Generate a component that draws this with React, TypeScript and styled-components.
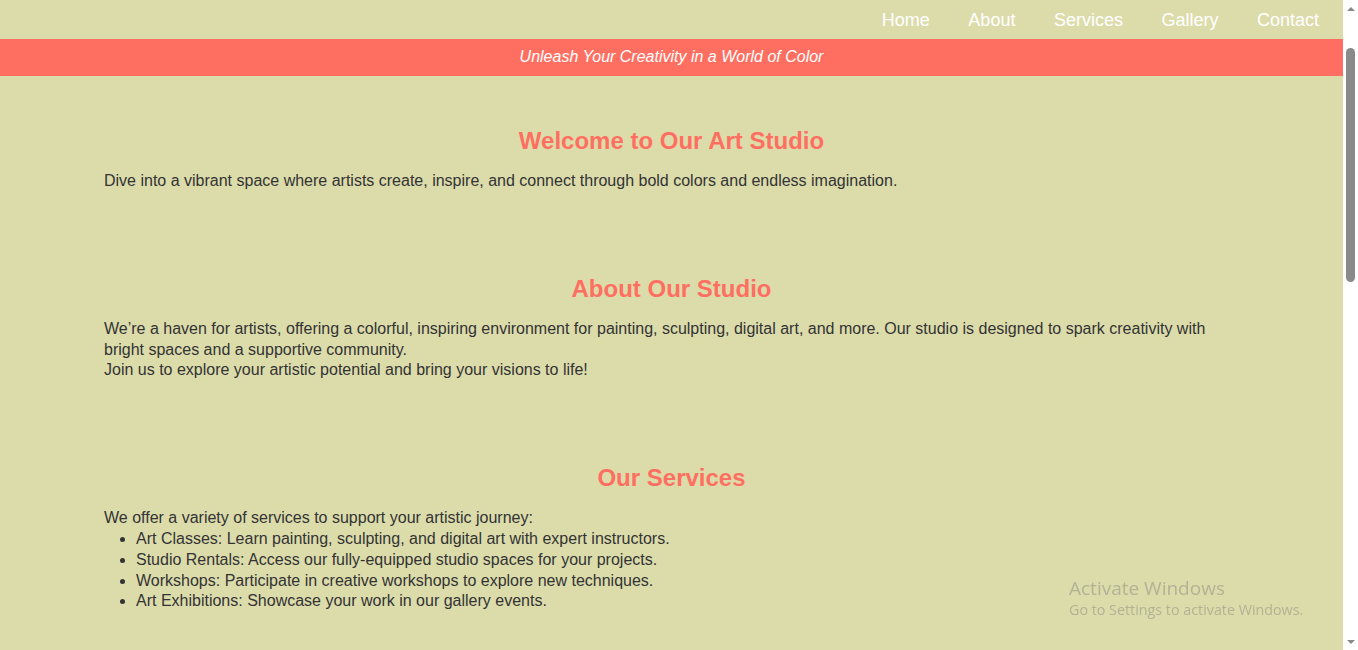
import React from "react";
import styled, { createGlobalStyle } from "styled-components";

const GlobalStyle = createGlobalStyle`
  html, body {
    margin: 0;
    padding: 0;
    overflow: hidden;
  }
  body {
    background: #dcdcab;
    font-family: "Liberation Sans", Arial, sans-serif;
    color: #333333;
  }
`;

const Window = styled.div`
  display: flex;
  height: 100vh;
  overflow: hidden;
`;

const Page = styled.div`
  flex: 1;
  min-width: 0;
  background: #dcdcab;
`;

const Header = styled.header`
  background: #dcdcab;
`;

const Nav = styled.nav`
  display: flex;
  justify-content: flex-end;
  align-items: center;
  gap: 38.5px;
  height: 39px;
  padding-right: 24px;
  padding-top: 1px;
  box-sizing: border-box;
`;

const NavLink = styled.a`
  color: #ffffff;
  font-size: 18px;
  text-decoration: none;
`;

const Banner = styled.div`
  background: #ff6f61;
  color: #ffffff;
  height: 37px;
  display: flex;
  align-items: center;
  justify-content: center;
  font-style: italic;
  font-size: 16px;
  padding-bottom: 1px;
  box-sizing: border-box;
`;

const Main = styled.main`
  padding-top: 9px;
`;

const Section = styled.section`
  padding: 42px 104px 41px;
`;

const Title = styled.h2`
  margin: 0 0 16px;
  color: #ff6f61;
  font-size: 24px;
  line-height: 28px;
  text-align: center;
  font-weight: bold;
`;

const Text = styled.p`
  margin: 0;
  font-size: 16px;
  line-height: 20.8px;
`;

const List = styled.ul`
  margin: 0;
  padding-left: 32px;
  font-size: 16px;
  line-height: 20.8px;
`;

const Scrollbar = styled.div`
  width: 15px;
  flex: none;
  background: #ffffff;
  display: flex;
  flex-direction: column;
  align-items: center;
`;

const Arrow = styled.div<{ $down?: boolean }>`
  height: 17px;
  width: 15px;
  display: flex;
  align-items: center;
  justify-content: center;
  &::before {
    content: "";
    border-left: 4px solid transparent;
    border-right: 4px solid transparent;
    ${(p) =>
      p.$down
        ? "border-top: 4px solid #8a8a8a;"
        : "border-bottom: 4px solid #8a8a8a;"}
  }
`;

const Track = styled.div`
  flex: 1;
  width: 15px;
  display: flex;
  justify-content: center;
  padding-top: 31px;
  box-sizing: border-box;
`;

const Thumb = styled.div`
  width: 9px;
  height: 234px;
  border-radius: 5px;
  background: #8a8a8a;
`;

const Watermark = styled.div`
  position: fixed;
  left: 1069px;
  top: 576px;
  color: rgba(120, 120, 120, 0.42);
  font-family: "Open Sans", "Noto Sans", sans-serif;
  pointer-events: none;
`;

const WmTitle = styled.div`
  font-size: 19px;
  line-height: 24px;
`;

const WmSub = styled.div`
  font-size: 14.3px;
  line-height: 20px;
`;

export default function App() {
  return (
    <>
      <GlobalStyle />
      <Window>
        <Page>
          <Header>
            <Nav>
              <NavLink href="#home">Home</NavLink>
              <NavLink href="#about">About</NavLink>
              <NavLink href="#services">Services</NavLink>
              <NavLink href="#gallery">Gallery</NavLink>
              <NavLink href="#contact">Contact</NavLink>
            </Nav>
            <Banner>Unleash Your Creativity in a World of Color</Banner>
          </Header>
          <Main>
            <Section id="home">
              <Title>Welcome to Our Art Studio</Title>
              <Text>
                Dive into a vibrant space where artists create, inspire, and connect through bold colors and endless imagination.
              </Text>
            </Section>
            <Section id="about">
              <Title>About Our Studio</Title>
              <Text>
                We’re a haven for artists, offering a colorful, inspiring environment for painting, sculpting, digital art, and more. Our studio is designed to spark creativity with bright spaces and a supportive community.
                <br />
                Join us to explore your artistic potential and bring your visions to life!
              </Text>
            </Section>
            <Section id="services">
              <Title>Our Services</Title>
              <Text>We offer a variety of services to support your artistic journey:</Text>
              <List>
                <li>Art Classes: Learn painting, sculpting, and digital art with expert instructors.</li>
                <li>Studio Rentals: Access our fully-equipped studio spaces for your projects.</li>
                <li>Workshops: Participate in creative workshops to explore new techniques.</li>
                <li>Art Exhibitions: Showcase your work in our gallery events.</li>
              </List>
            </Section>
          </Main>
        </Page>
        <Scrollbar>
          <Arrow />
          <Track>
            <Thumb />
          </Track>
          <Arrow $down />
        </Scrollbar>
      </Window>
      <Watermark>
        <WmTitle>Activate Windows</WmTitle>
        <WmSub>Go to Settings to activate Windows.</WmSub>
      </Watermark>
    </>
  );
}
